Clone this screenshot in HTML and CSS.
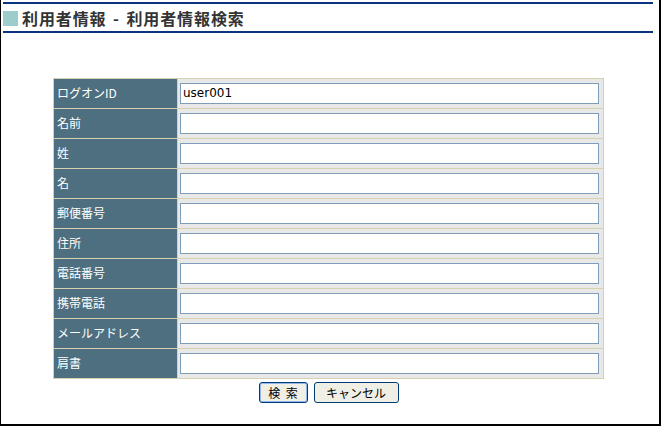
FILE: index.html
```html
<!DOCTYPE html>
<html lang="ja">
<head>
  <meta charset="UTF-8" />
  <title>利用者情報検索</title>
  <link rel="stylesheet" href="styles.css">
</head>
<body>
  <div class="frame">
    <div class="page-title">
      <span class="title-mark"></span>
      <h1>利用者情報 - 利用者情報検索</h1>
    </div>

    <form class="search-form">
      <table class="search-table">
        <tr><th>ログオンID</th><td><input type="text" value="user001"></td></tr>
        <tr><th>名前</th><td><input type="text"></td></tr>
        <tr><th>姓</th><td><input type="text"></td></tr>
        <tr><th>名</th><td><input type="text"></td></tr>
        <tr><th>郵便番号</th><td><input type="text"></td></tr>
        <tr><th>住所</th><td><input type="text"></td></tr>
        <tr><th>電話番号</th><td><input type="text"></td></tr>
        <tr><th>携帯電話</th><td><input type="text"></td></tr>
        <tr><th>メールアドレス</th><td><input type="text"></td></tr>
        <tr><th>肩書</th><td><input type="text"></td></tr>
      </table>
      <div class="button-row">
        <button type="button" class="btn btn-primary">検&nbsp;&nbsp;索</button>
        <button type="button" class="btn">キャンセル</button>
      </div>
    </form>
  </div>
</body>
</html>
```

FILE: styles.css
```css
* { margin: 0; padding: 0; box-sizing: border-box; }

html, body {
  background: #fff;
  font-family: "Noto Sans CJK JP", "DejaVu Sans", sans-serif;
  color: #000;
}

.frame {
  width: 661px;
  height: 426px;
  border-left: 1px solid #000;
  border-right: 2px solid #000;
  border-bottom: 2px solid #000;
  padding: 2px 6px 0 2px;
}

.page-title {
  display: flex;
  align-items: center;
  gap: 4px;
  height: 31px;
  border-top: 2px solid #0a3380;
  border-bottom: 2px solid #0a3380;
}

.title-mark {
  width: 15px;
  height: 15px;
  background: #9ccccc;
  margin-top: 1px;
}

.page-title h1 {
  font-size: 16px;
  font-weight: bold;
  color: #333;
  line-height: 1;
  letter-spacing: 0.9px;
  word-spacing: 2px;
}

.search-form {
  margin-top: 45px;
}

.search-table {
  margin-left: 50px;
  width: 551px;
  border-collapse: separate;
  border-spacing: 1px;
  background: #d6d2b0;
}

.search-table th {
  width: 123px;
  height: 29px;
  background: #4d6f80;
  color: #fff;
  font-size: 12px;
  font-weight: normal;
  text-align: left;
  padding: 0 0 2px 3px;
}

.search-table td {
  height: 29px;
  background: #e8e8e8;
  padding: 0 3px 0 2px;
}

.search-table input {
  display: block;
  width: 419px;
  height: 21px;
  border: 1px solid #7f9db9;
  background: #fff;
  font-family: "DejaVu Sans", sans-serif;
  font-size: 12px;
  padding: 0 2px;
  margin-top: -1px;
}

.button-row {
  display: flex;
  justify-content: center;
  gap: 6px;
  margin-left: 50px;
  width: 551px;
  margin-top: 3px;
}

.btn {
  height: 21px;
  padding: 0 14px;
  font-family: "Noto Sans CJK JP", sans-serif;
  font-size: 12px;
  line-height: 1;
  background: #f0efe6;
  border: 1px solid #003c74;
  border-radius: 3px;
  color: #000;
}

.btn-primary {
  width: 49px;
  padding: 0;
  box-shadow: inset 0 0 0 1px #94b8ec;
}

.btn + .btn {
  width: 85px;
  padding: 0;
}
```
